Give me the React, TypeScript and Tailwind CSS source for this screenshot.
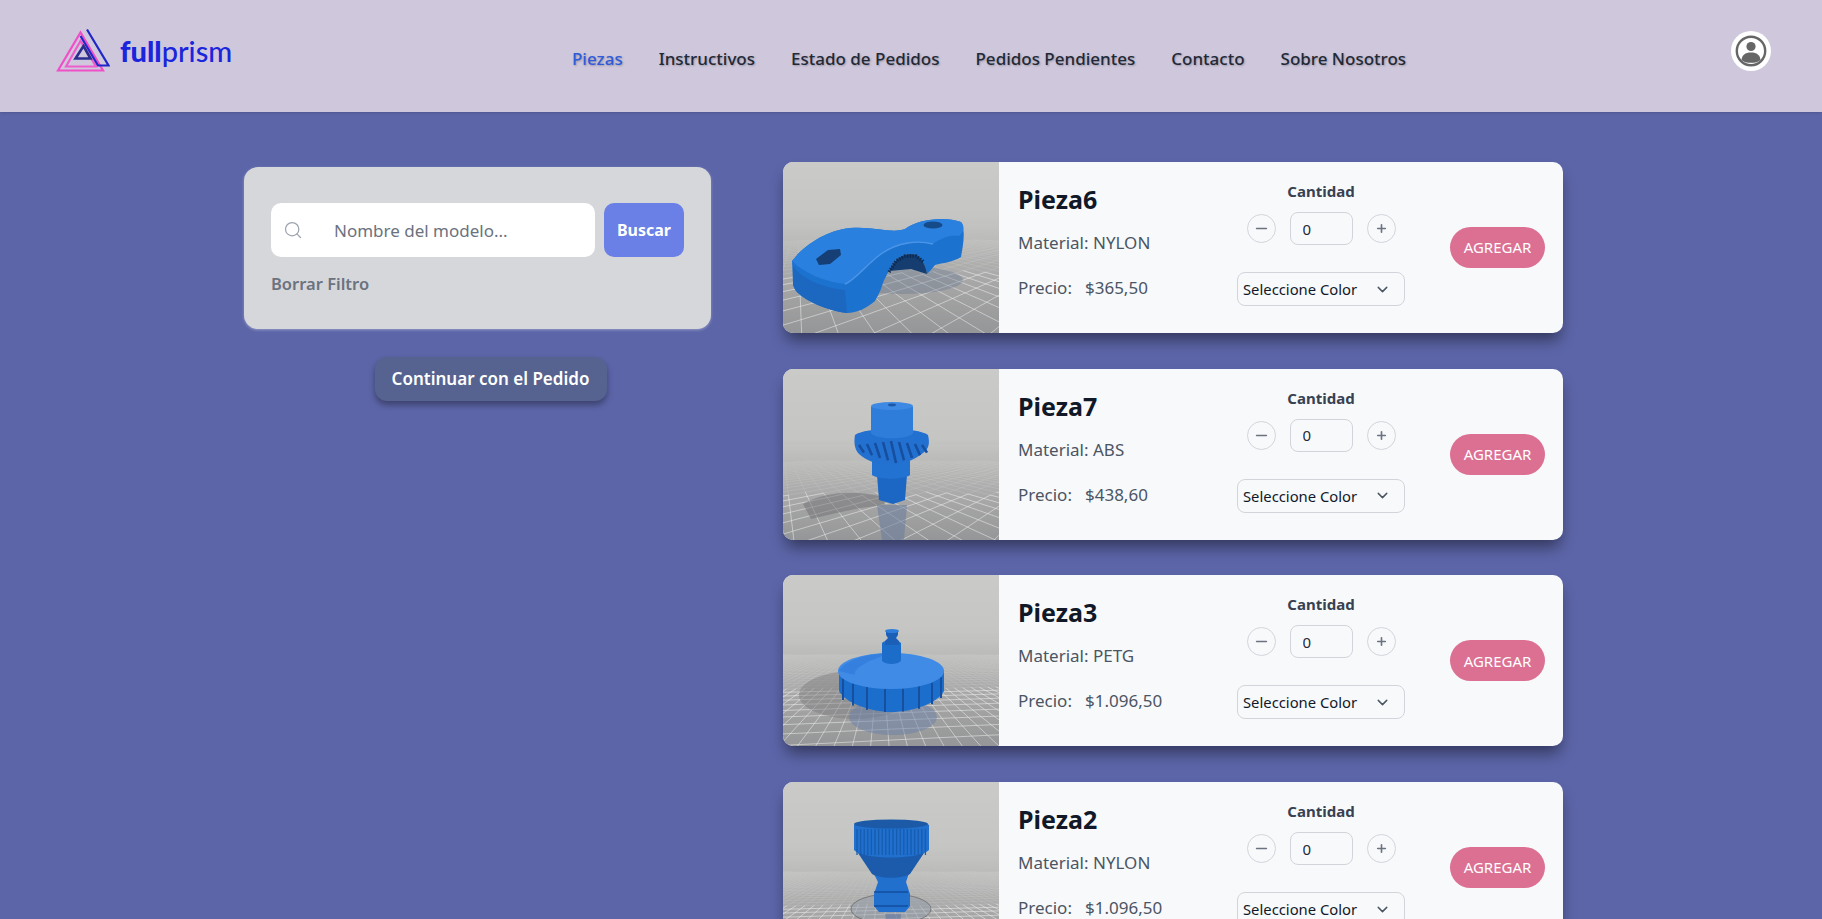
import { useMemo, type ReactNode } from 'react';
import { ChevronDown, Minus, Plus, Search } from 'lucide-react';

const NAV = ['Piezas', 'Instructivos', 'Estado de Pedidos', 'Pedidos Pendientes', 'Contacto', 'Sobre Nosotros'];

// perspective floor grid, angle in degrees turns the tiles
function Floor({ id, horizon, angle, cell }: { id: string; horizon: number; angle: number; cell: number }) {
  const [near, far] = useMemo(() => {
    const nearLines: string[] = [];
    const farLines: string[] = [];
    const rad = (angle * Math.PI) / 180;
    const project = (x: number, z: number) => {
      const rx = x * Math.cos(rad) - z * Math.sin(rad);
      const rz = x * Math.sin(rad) + z * Math.cos(rad) + 60;
      return { x: 108 + (rx * 150) / rz, y: horizon + 8200 / rz, d: rz };
    };
    const seg = (ax: number, az: number, bx: number, bz: number) => {
      const p = project(ax, az);
      const q = project(bx, bz);
      if (p.d < 20 || q.d < 20 || p.d > 420 || q.d > 420) return;
      const line = `M${p.x.toFixed(1)} ${p.y.toFixed(1)}L${q.x.toFixed(1)} ${q.y.toFixed(1)}`;
      if (p.d < 150) nearLines.push(line);
      else farLines.push(line);
    };
    const n = Math.ceil(420 / cell);
    for (let i = -n; i <= n; i++) {
      for (let s = -n; s < n; s++) {
        seg(i * cell, s * cell, i * cell, (s + 1) * cell);
        seg(s * cell, i * cell, (s + 1) * cell, i * cell);
      }
    }
    return [nearLines.join(''), farLines.join('')];
  }, [horizon, angle, cell]);

  return (
    <>
      <defs>
        <linearGradient id={`${id}-bg`} x1="0" y1="0" x2="0" y2="1">
          <stop offset="0" stopColor="#cacac8" />
          <stop offset={(horizon - 4) / 171} stopColor="#c5c5c3" />
          <stop offset={(horizon + 55) / 171} stopColor="#a9a9a9" />
          <stop offset="1" stopColor="#959697" />
        </linearGradient>
        <linearGradient id={`${id}-fade`} x1="0" y1="0" x2="0" y2="1">
          <stop offset="0" stopColor="#c3c3c1" stopOpacity="1" />
          <stop offset="1" stopColor="#b2b2b1" stopOpacity="0" />
        </linearGradient>
        <filter id={`${id}-soft`}>
          <feGaussianBlur stdDeviation="0.45" />
        </filter>
      </defs>
      <rect width="216" height="171" fill={`url(#${id}-bg)`} />
      <path d={far} stroke="#fff" strokeWidth="0.4" strokeOpacity="0.28" fill="none" />
      <path d={near} stroke="#fff" strokeWidth="0.6" strokeOpacity="0.75" fill="none" />
      <rect y={horizon + 4} width="216" height="34" fill={`url(#${id}-fade)`} />
    </>
  );
}

function Clamp() {
  return (
    <svg viewBox="0 0 216 171" className="h-full w-full" preserveAspectRatio="none">
      <Floor id="a" horizon={58} angle={32} cell={15} />
      <ellipse cx="120" cy="118" rx="60" ry="14" fill="#64738c" opacity="0.35" filter="url(#a-soft)" />
      <g filter="url(#a-soft)">
        <path d="M9 99C22 82 45 68 67 66C92 64 108 72 122 67C135 57 162 54 178 60C183 68 180 84 178 95C170 100 160 101 152 103C148 108 146 110 144 112C143 105 140 97 134 93C124 90 116 94 110 102C105 110 102 116 100 121C98 128 95 134 92 139C84 146 74 151 64 151C50 150 30 142 20 135C14 131 10 126 10 121Z" fill="#1f72cf" />
        <path d="M9 99C22 82 45 68 67 66C92 64 108 72 122 67C135 57 162 54 178 60C182 64 181 70 176 74C168 72 158 76 150 82C135 78 115 80 98 92C84 102 72 118 62 122C44 120 22 112 9 99Z" fill="#2b80de" />
        <path d="M62 122C72 118 84 102 98 92C115 80 135 78 150 82" stroke="#4a96e8" strokeWidth="1.4" fill="none" />
        <path d="M110 102C116 94 124 90 134 93C140 97 143 105 144 112L128 107L106 109Z" fill="#123c70" />
        <path d="M106 110L113 99L122 94L133 94L141 100" stroke="#0c2a52" strokeWidth="3.4" strokeDasharray="1.4 1.4" fill="none" />
        <path d="M33 97L45 88L57 87L58 93L47 102L36 103Z" fill="#123f74" />
        <ellipse cx="150" cy="63" rx="9.5" ry="3.6" fill="#164b8a" />
        <path d="M10 104C20 118 42 126 62 128L64 151C50 150 30 142 20 135C14 131 10 126 10 121Z" fill="#1b68c0" />
      </g>
    </svg>
  );
}

function Gear() {
  const teeth = [76, 84, 92, 100, 108, 116, 124, 132, 139];
  return (
    <svg viewBox="0 0 216 171" className="h-full w-full" preserveAspectRatio="none">
      <Floor id="b" horizon={72} angle={36} cell={15} />
      <path d="M20 135C45 121 78 122 100 128L102 136C75 138 50 145 28 150Z" fill="#6f7074" opacity="0.5" filter="url(#b-soft)" />
      <path d="M94 136H124L121 171H99Z" fill="#6a7d9e" opacity="0.55" filter="url(#b-soft)" />
      <g filter="url(#b-soft)">
        <path d="M94 106H124L122 131L110 135L96 131Z" fill="#1c66c4" />
        <path d="M89 92H127V106C120 111 97 111 89 106Z" fill="#2272d2" />
        <path d="M72 66C82 58 135 58 145 66C147 74 146 80 140 84C130 92 118 96 108 96C95 96 84 92 76 85C71 80 71 72 72 66Z" fill="#2470d0" />
        {teeth.map((x, i) => {
          const drop = 94 - Math.abs(i - 4) * 2.6;
          return <path key={x} d={`M${x} ${72 + Math.abs(i - 4)}L${x + 5} ${drop}`} stroke="#164f9f" strokeWidth="2.6" />;
        })}
        <path d="M88 38C92 33 126 33 130 38V64C126 71 92 71 88 64Z" fill="#2e7ddb" />
        <ellipse cx="109" cy="37" rx="21" ry="4" fill="#3c89e4" />
        <ellipse cx="109" cy="36" rx="4" ry="1.4" fill="#1e5aa8" />
      </g>
    </svg>
  );
}

function Cap() {
  const ribs = [60, 70, 84, 102, 120, 136, 149, 158];
  return (
    <svg viewBox="0 0 216 171" className="h-full w-full" preserveAspectRatio="none">
      <Floor id="c" horizon={60} angle={4} cell={9} />
      <ellipse cx="72" cy="120" rx="56" ry="24" fill="#77777a" opacity="0.42" filter="url(#c-soft)" />
      <ellipse cx="110" cy="142" rx="44" ry="18" fill="#6b80a8" opacity="0.5" filter="url(#c-soft)" />
      <g filter="url(#c-soft)">
        <path d="M56 96V116C62 128 88 137 108 137C130 137 155 128 161 116V96Z" fill="#1f6ecc" />
        {ribs.map((x) => {
          const t = (x - 108) / 53;
          const top = 96 + 18 * Math.sqrt(1 - t * t);
          const bottom = 116 + 21 * Math.sqrt(1 - t * t);
          return <path key={x} d={`M${x} ${top.toFixed(1)}V${bottom.toFixed(1)}`} stroke="#164f9f" strokeWidth="2" />;
        })}
        <ellipse cx="108" cy="96" rx="53" ry="18" fill="#3f8be6" />
        <path d="M56 96C62 84 90 78 108 78C90 84 70 92 72 100Z" fill="#3580de" />
        <path d="M99 68C102 64 115 64 118 68V86C114 90 103 90 99 86Z" fill="#1e6cca" />
        <path d="M103 56H115V60L113 63L116 66V70H102V66L105 63L103 60Z" fill="#1a5fb6" />
        <ellipse cx="109" cy="56" rx="7" ry="2" fill="#2e7ddb" />
      </g>
    </svg>
  );
}

function Coupling() {
  const ribs = Array.from({ length: 20 }, (_, i) => 74 + i * 3.6);
  return (
    <svg viewBox="0 0 216 171" className="h-full w-full" preserveAspectRatio="none">
      <Floor id="d" horizon={70} angle={4} cell={9} />
      <ellipse cx="108" cy="127" rx="40" ry="15" fill="#8d9aa8" fillOpacity="0.45" stroke="#555" strokeWidth="0.6" />
      <path d="M102 132H118L116 171H104Z" fill="#6377a0" opacity="0.6" />
      <g filter="url(#d-soft)">
        <path d="M89 88H127L123 100L127 112V124L122 130H96L91 124V112L95 100Z" fill="#2170ce" />
        <path d="M73 68H143L127 92C118 97 98 97 89 92Z" fill="#1a5aab" />
        <path d="M71 43C76 38 140 38 146 43V68C136 78 80 78 71 68Z" fill="#2170ce" />
        {ribs.map((x) => (
          <path key={x} d={`M${x} 47V73`} stroke="#155cb0" strokeWidth="1.3" />
        ))}
        <ellipse cx="108" cy="42" rx="37" ry="4.5" fill="#1a5aa8" />
        <path d="M91 110H125M91 124H125" stroke="#164f9f" strokeWidth="1.5" />
      </g>
    </svg>
  );
}

const PIEZAS: { name: string; material: string; price: string; image: ReactNode }[] = [
  { name: 'Pieza6', material: 'NYLON', price: '$365,50', image: <Clamp /> },
  { name: 'Pieza7', material: 'ABS', price: '$438,60', image: <Gear /> },
  { name: 'Pieza3', material: 'PETG', price: '$1.096,50', image: <Cap /> },
  { name: 'Pieza2', material: 'NYLON', price: '$1.096,50', image: <Coupling /> },
];

function Logo() {
  return (
    <div className="flex items-center gap-[10px]">
      <svg width="54" height="46" viewBox="0 0 54 46" fill="none">
        <path d="M2 43.5L24.5 5.5L47 43.5Z" stroke="#f04fc8" strokeWidth="2.2" />
        <path d="M10 39.5L24.5 14L40 39.5Z" stroke="#ee5ccd" strokeWidth="2.2" />
        <path d="M31 2.5L52.5 38.5H42L24.5 9" stroke="#2027c9" strokeWidth="2.2" />
        <path d="M19.5 31.5L27.5 19L34.5 31.5Z" stroke="#2a2f8f" strokeWidth="2.6" />
      </svg>
      <span className="mt-[2px] font-['Lato',sans-serif] text-[29px] leading-none text-[#1a25dc]">
        <span className="font-black">full</span>
        <span className="font-medium">prism</span>
      </span>
    </div>
  );
}

function Avatar() {
  return (
    <div className="flex h-[40px] w-[40px] items-center justify-center rounded-full bg-white">
      <svg width="32" height="32" viewBox="0 0 32 32">
        <circle cx="16" cy="16" r="14.2" fill="none" stroke="#666" strokeWidth="2.4" />
        <circle cx="16" cy="11.5" r="4.6" fill="#666" />
        <path d="M6.5 25C7 20 10 17.5 16 17.5S25 20 25.5 25C22 28.8 10 28.8 6.5 25Z" fill="#666" />
      </svg>
    </div>
  );
}

function Card({ name, material, price, image }: { name: string; material: string; price: string; image: ReactNode }) {
  return (
    <div className="flex h-[171px] w-[780px] shrink-0 overflow-hidden rounded-[10px] bg-[#f8f9fb] shadow-[0_10px_15px_-3px_rgba(0,0,0,0.45)]">
      <div className="h-full w-[216px] shrink-0">{image}</div>
      <div className="flex w-[219px] shrink-0 flex-col pl-[19px] pt-[18px]">
        <h2 className="text-[25px] font-bold leading-[38px] text-[#111827]">{name}</h2>
        <p className="mt-[12px] text-[17px] leading-[26px] text-[#4b5563]">Material: {material}</p>
        <p className="mt-[19px] text-[17px] leading-[26px] text-[#4b5563]">
          Precio:<span className="ml-[13px]">{price}</span>
        </p>
      </div>
      <div className="ml-[19px] flex w-[168px] shrink-0 flex-col items-center pt-[19px]">
        <span className="text-[15px] font-bold leading-[20px] text-[#374151]">Cantidad</span>
        <div className="mt-[11px] flex items-center gap-[14px]">
          <button className="flex h-[29px] w-[29px] items-center justify-center rounded-full border border-[#d1d5db] text-[#6b7280]">
            <Minus size={17} strokeWidth={2} />
          </button>
          <input readOnly value="0" className="h-[33px] w-[63px] rounded-[8px] border border-[#d1d5db] bg-[#f8f9fb] pl-[12px] text-[15px] text-[#1f2937] outline-none" />
          <button className="flex h-[29px] w-[29px] items-center justify-center rounded-full border border-[#d1d5db] text-[#6b7280]">
            <Plus size={13} strokeWidth={3} />
          </button>
        </div>
        <button className="mt-[27px] flex h-[34px] w-[168px] items-center justify-between rounded-[8px] border border-[#d1d5db] pl-[5px] pr-[13px] text-[14.8px] text-[#111827]">
          Seleccione Color
          <ChevronDown size={17} className="text-[#4b5563]" />
        </button>
      </div>
      <div className="ml-[45px] flex items-center">
        <button className="flex h-[41px] w-[95px] items-center justify-center rounded-full bg-[#db7093] text-[15px] text-white">AGREGAR</button>
      </div>
    </div>
  );
}

export default function App() {
  return (
    <div className="flex h-screen flex-col overflow-hidden bg-[#5c65a8] font-['Noto_Sans',sans-serif]">
      <header className="relative flex h-[112px] shrink-0 items-center bg-[#cfc8dd] pl-[56px] pr-[51px] shadow-sm">
        <div className="mt-[-13px] w-[516px]">
          <Logo />
        </div>
        <nav className="mt-[5px] flex gap-[36px]">
          {NAV.map((item, i) => (
            <a key={item} className={`text-[17px] font-medium [text-shadow:1px_1px_2px_rgba(0,0,0,0.25)] ${i === 0 ? 'text-[#2f5bd8]' : 'text-[#1f2937]'}`}>
              {item}
            </a>
          ))}
        </nav>
        <div className="ml-auto mt-[-10px]">
          <Avatar />
        </div>
      </header>
      <main className="flex pl-[244px]">
        <aside className="mt-[55px] w-[467px] shrink-0">
          <div className="h-[162px] rounded-[14px] bg-[#d6d7da] px-[27px] pt-[36px] shadow-[0_1px_3px_rgba(255,255,255,0.35)]">
            <div className="flex gap-[9px]">
              <div className="relative w-[324px]">
                <Search size={20} strokeWidth={1.5} className="absolute left-[12px] top-[17px] text-[#9ca3af]" />
                <input placeholder="Nombre del modelo..." className="h-[54px] w-full rounded-[10px] bg-white pl-[63px] text-[17px] text-[#374151] outline-none placeholder:text-[#6b7280]" />
              </div>
              <button className="h-[54px] w-[80px] rounded-[10px] bg-[#6a80e6] text-[16px] font-bold text-white">Buscar</button>
            </div>
            <button className="mt-[14px] text-[16.5px] font-semibold leading-[26px] text-[#6b7280]">Borrar Filtro</button>
          </div>
          <div className="mt-[28px] flex justify-center">
            <button className="ml-[26px] h-[44px] w-[232px] rounded-[12px] bg-[#566390] text-[17px] font-semibold text-white shadow-[0_4px_6px_rgba(0,0,0,0.35)]">Continuar con el Pedido</button>
          </div>
        </aside>
        <section className="ml-[72px] mt-[50px] flex flex-col gap-[35.7px]">
          {PIEZAS.map((p) => (
            <Card key={p.name} {...p} />
          ))}
        </section>
      </main>
    </div>
  );
}
